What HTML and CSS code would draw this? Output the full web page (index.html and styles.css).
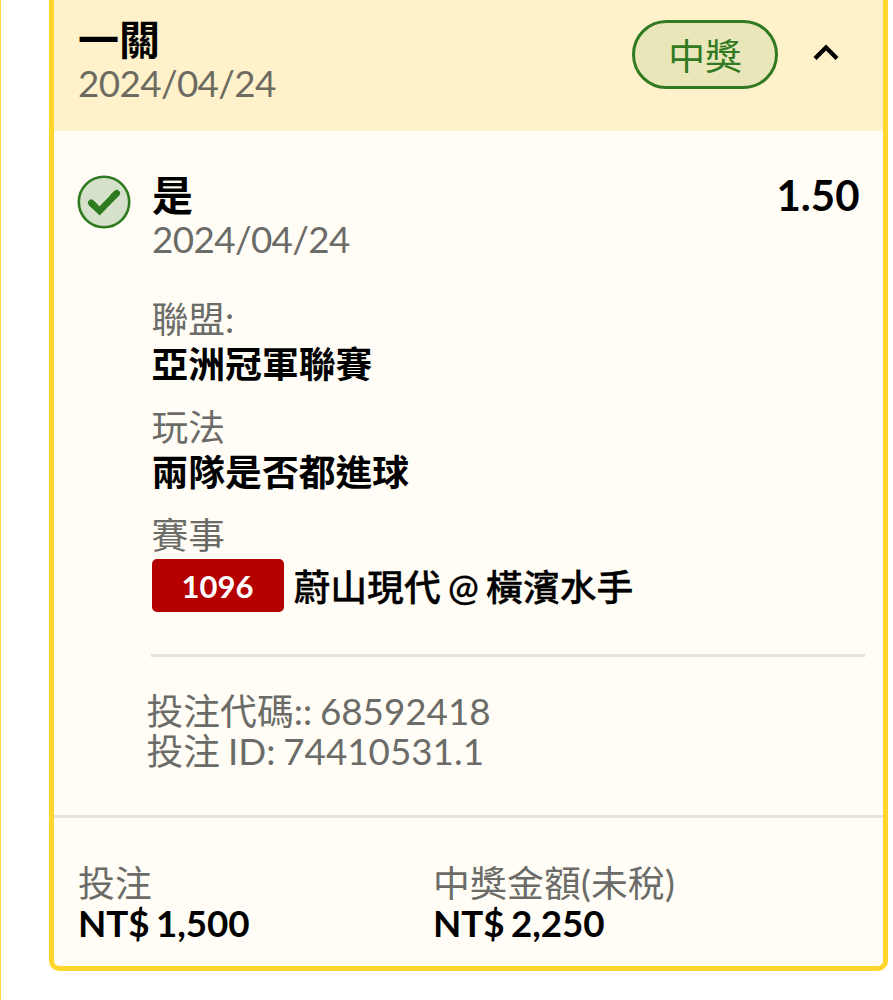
FILE: index.html
```html
<!DOCTYPE html>
<html lang="zh-Hant">
<head>
<meta charset="utf-8">
<title>投注</title>
<link rel="stylesheet" href="styles.css">
</head>
<body>
<main class="page">
  <article class="ticket">
    <header class="ticket-header">
      <div>
        <h1 class="title">一關</h1>
        <div class="date">2024/04/24</div>
      </div>
      <div class="header-actions">
        <span class="status">中獎</span>
        <svg class="chevron" viewBox="0 0 26 18"><path d="M2 15.5 13 4.5 24 15.5"/></svg>
      </div>
    </header>
    <section class="selection">
      <svg class="check" viewBox="0 0 54 54"><circle cx="27" cy="27" r="25.2"/><path class="tick-end" d="M14.2 27.8 17 30.6M36.6 21.2 39.8 18.2"/><path d="M14.2 27.8 22.6 36 39.8 18.2"/></svg>
      <div class="selection-main">
        <div class="selection-top">
          <div>
            <h2 class="title">是</h2>
            <div class="date">2024/04/24</div>
          </div>
          <strong class="odds">1.50</strong>
        </div>
        <dl class="details">
          <div class="detail"><dt>聯盟:</dt><dd>亞洲冠軍聯賽</dd></div>
          <div class="detail"><dt>玩法</dt><dd>兩隊是否都進球</dd></div>
          <div class="detail"><dt>賽事</dt><dd class="match"><span class="match-code">1096</span><span class="teams">蔚山現代 @ 橫濱水手</span></dd></div>
        </dl>
        <div class="codes">
          <div>投注代碼:: 68592418</div>
          <div>投注 ID: 74410531.1</div>
        </div>
      </div>
    </section>
    <footer class="totals">
      <div><div class="label">投注</div><strong class="amount">NT$ 1,500</strong></div>
      <div><div class="label">中獎金額(未稅)</div><strong class="amount">NT$ 2,250</strong></div>
    </footer>
  </article>
</main>
</body>
</html>
```
FILE: styles.css
```css
* { box-sizing: border-box; }
body {
  margin: 0;
  background: #fff;
  color: #000;
  font: 400 36.8px/40px Lato, "Noto Sans CJK TC", sans-serif;
  overflow: hidden;
}
.page {
  height: 1000px;
  padding: 0 5px 0 47.5px;
  border-left: 1px solid #ffd83a;
}
.ticket {
  height: 970.5px;
  border: 5px solid #ffd62b;
  border-top: 0;
  border-radius: 0 0 10px 10px;
  background: #fffdf5;
  overflow: hidden;
}
.ticket-header {
  display: flex;
  justify-content: space-between;
  height: 131px;
  padding: 17px 44px 0 24.5px;
  background: #fff2cb;
}
.title { margin: 0; font-size: 41px; line-height: 45px; font-weight: 700; }
.date { color: #6c6a61; letter-spacing: -.62px; padding-top: 1px; }
.header-actions { display: flex; align-items: center; gap: 35px; height: 69px; margin-top: 3px; }
.status {
  width: 146px;
  height: 69px;
  border: 3px solid #327a22;
  border-radius: 35px;
  background: #e9e7b9;
  color: #327a22;
  line-height: 67px;
  text-align: center;
}
.chevron { width: 26px; height: 18px; margin-bottom: 6px; fill: none; stroke: #000; stroke-width: 4.4; }
.selection {
  display: flex;
  gap: 20px;
  height: 683.5px;
  padding: 42px 18.5px 0 23px;
}
.check { flex: none; width: 54px; height: 54px; margin-top: 2px; stroke: #2e7a1e; }
.check circle { fill: #d5e1cb; stroke-width: 2.6; }
.check path { fill: none; stroke-width: 6.5; }
.check .tick-end { stroke-linecap: round; }
.selection-main { flex: 1; }
.selection-top { display: flex; justify-content: space-between; padding-left: 1.5px; }
.selection-top .date { color: #6b6b68; }
.odds { margin-right: 5px; font-size: 42px; line-height: 45px; }
.details { margin: 0; padding: 38px 0 41.5px 1px; border-bottom: 3px solid #e4e2dc; }
.detail { line-height: 45px; }
.detail + .detail { margin-top: 18px; }
.detail dt { color: #6b6b68; }
.detail dd { margin: 0; font-weight: 700; }
.detail .match { display: flex; align-items: center; gap: 10px; height: 53px; margin-top: 1px; }
.match-code {
  width: 132px;
  height: 53px;
  border-radius: 5px;
  background: #b50000;
  color: #fff;
  font-size: 31px;
  line-height: 54px;
  text-align: center;
}
.teams { padding-top: 3px; font-weight: 500; word-spacing: -2px; -webkit-text-stroke: .3px #000; }
.codes { margin: 34.5px 0 0 -4px; color: #6b6b68; word-spacing: -1.6px; }
.totals {
  display: grid;
  grid-template-columns: 355px 1fr;
  height: 151px;
  padding: 45px 25px 0 24.5px;
  border-top: 3px solid #e4e2dc;
}
.label { color: #6b6b68; letter-spacing: .2px; }
.amount { display: block; letter-spacing: -.1px; word-spacing: -2.2px; }
```
